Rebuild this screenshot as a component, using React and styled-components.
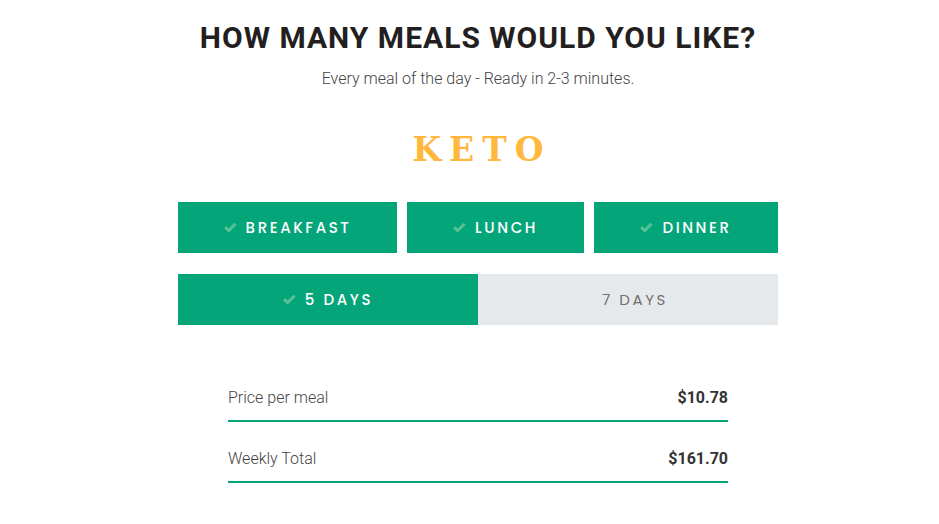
import React from "react";
import styled, { createGlobalStyle } from "styled-components";

const Global = createGlobalStyle`
  html, body { margin: 0; padding: 0; background: #fff; }
  body { font-family: Roboto, "Liberation Sans", sans-serif; }
`;

const Page = styled.div`
  width: 939px;
  box-sizing: border-box;
  padding: 20px 0 0 17px;
  display: flex;
  flex-direction: column;
  align-items: center;
`;

const Title = styled.h1`
  margin: 0;
  font-family: Roboto, sans-serif;
  font-weight: 700;
  font-size: 30px;
  line-height: 36px;
  letter-spacing: 1px;
  color: #231f20;
`;

const Subtitle = styled.p`
  margin: 13px 0 0;
  font-family: Roboto, sans-serif;
  font-weight: 300;
  font-size: 16px;
  line-height: 20px;
  color: #444;
`;

const Plan = styled.div`
  margin-top: 39px;
  font-family: "DejaVu Serif", serif;
  font-weight: 700;
  font-size: 33px;
  line-height: 44px;
  letter-spacing: 8px;
  margin-right: -8px;
  color: #ffb83d;
`;

const Options = styled.div`
  width: 600px;
  margin-top: 30px;
  display: flex;
  flex-direction: column;
  gap: 21px;
`;

const Row = styled.div`
  display: flex;
  gap: ${p => p.$gap || 0}px;
`;

const Choice = styled.button`
  flex: ${p => p.$flex || 1} 1 0;
  min-width: 0;
  height: 51px;
  border: 0;
  margin: 0;
  padding: 0;
  display: flex;
  align-items: center;
  justify-content: center;
  gap: 9px;
  background: ${p => (p.$active ? "#05a57a" : "#e6e9ec")};
  color: ${p => (p.$active ? "#fff" : "#707070")};
  font-family: Poppins, Inter, "Noto Sans", sans-serif;
  font-size: 15px;
  font-weight: ${p => (p.$active ? 500 : 400)};
  letter-spacing: 2.6px;
  text-transform: uppercase;
  cursor: pointer;
`;

const Caption = styled.span`
  margin-left: ${p => p.$shift || 0}px;
`;

const Check = styled.svg`
  width: 13px;
  height: 10px;
  flex: none;
`;

const Summary = styled.div`
  width: 500px;
  margin-top: 36px;
  display: flex;
  flex-direction: column;
`;

const Line = styled.div`
  display: flex;
  justify-content: space-between;
  align-items: flex-end;
  height: 61px;
  padding-bottom: 12px;
  border-bottom: 2px solid #05a57a;
  box-sizing: border-box;
  font-family: Roboto, sans-serif;
  font-size: 16px;
  line-height: 20px;
`;

const Label = styled.span`
  font-weight: 300;
  color: #444;
`;

const Value = styled.span`
  font-weight: 700;
  color: #333;
`;

const CheckIcon = () => (
  <Check viewBox="0 0 13 10">
    <path d="M0.2 5.2 L2.3 3.1 L4.7 5.5 L10.5 -0.3 L12.6 1.8 L4.7 9.7 Z" fill="#55c298" />
  </Check>
);

export default function App() {
  return (
    <Page>
      <Global />
      <Title>HOW MANY MEALS WOULD YOU LIKE?</Title>
      <Subtitle>Every meal of the day - Ready in 2-3 minutes.</Subtitle>
      <Plan>KETO</Plan>
      <Options>
        <Row $gap={10}>
          <Choice $active $flex={219}><CheckIcon /><Caption>Breakfast</Caption></Choice>
          <Choice $active $flex={177}><CheckIcon /><Caption>Lunch</Caption></Choice>
          <Choice $active $flex={184}><CheckIcon /><Caption>Dinner</Caption></Choice>
        </Row>
        <Row>
          <Choice $active><CheckIcon /><Caption>5 Days</Caption></Choice>
          <Choice><Caption $shift={14}>7 Days</Caption></Choice>
        </Row>
      </Options>
      <Summary>
        <Line><Label>Price per meal</Label><Value>$10.78</Value></Line>
        <Line><Label>Weekly Total</Label><Value>$161.70</Value></Line>
      </Summary>
    </Page>
  );
}
